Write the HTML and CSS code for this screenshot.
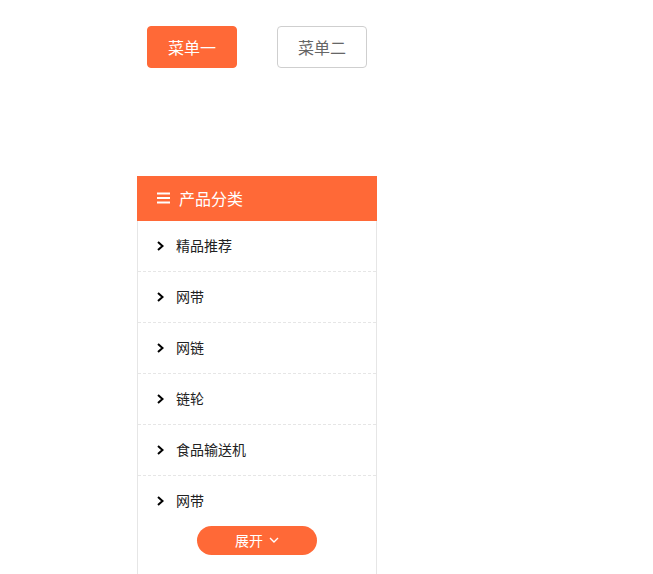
FILE: index.html
```html
<!DOCTYPE html>
<html lang="zh-CN">
<head>
<meta charset="utf-8">
<title>产品分类</title>
<link rel="stylesheet" href="styles.css">
</head>
<body>
<div class="menus">
  <button class="menu-btn active">菜单一</button>
  <button class="menu-btn">菜单二</button>
</div>
<div class="panel">
  <div class="panel-head">
    <svg class="bars" width="13" height="12" viewBox="0 0 13 12"><path d="M0 1.5h13M0 6h13M0 10.5h13" stroke="#fff" stroke-width="2"/></svg>
    <span>产品分类</span>
  </div>
  <ul class="list">
    <li class="item"><svg class="chev" width="7" height="10" viewBox="0 0 7 10"><path d="M1 1l4.5 4-4.5 4" fill="none" stroke="#000" stroke-width="2"/></svg><span>精品推荐</span></li>
    <li class="item"><svg class="chev" width="7" height="10" viewBox="0 0 7 10"><path d="M1 1l4.5 4-4.5 4" fill="none" stroke="#000" stroke-width="2"/></svg><span>网带</span></li>
    <li class="item"><svg class="chev" width="7" height="10" viewBox="0 0 7 10"><path d="M1 1l4.5 4-4.5 4" fill="none" stroke="#000" stroke-width="2"/></svg><span>网链</span></li>
    <li class="item"><svg class="chev" width="7" height="10" viewBox="0 0 7 10"><path d="M1 1l4.5 4-4.5 4" fill="none" stroke="#000" stroke-width="2"/></svg><span>链轮</span></li>
    <li class="item"><svg class="chev" width="7" height="10" viewBox="0 0 7 10"><path d="M1 1l4.5 4-4.5 4" fill="none" stroke="#000" stroke-width="2"/></svg><span>食品输送机</span></li>
    <li class="item last"><svg class="chev" width="7" height="10" viewBox="0 0 7 10"><path d="M1 1l4.5 4-4.5 4" fill="none" stroke="#000" stroke-width="2"/></svg><span>网带</span></li>
  </ul>
  <div class="more-wrap">
    <button class="more">展开 <svg class="down" width="10" height="6" viewBox="0 0 10 6"><path d="M1 1l4 4 4-4" fill="none" stroke="#fff" stroke-width="1.4"/></svg></button>
  </div>
</div>
</body>
</html>
```
FILE: styles.css
```css
* { box-sizing: border-box; }
html, body {
  margin: 0;
  padding: 0;
  background: #fff;
  font-family: "Noto Sans CJK SC", "Noto Sans", sans-serif;
  height: 574px;
  overflow: hidden;
}
.menus {
  display: flex;
  gap: 40px;
  padding: 26px 0 0 147px;
}
.menu-btn {
  width: 90px;
  height: 42px;
  border: 1px solid #cfcfcf;
  border-radius: 4px;
  background: #fff;
  color: #666;
  font-family: inherit;
  font-size: 16px;
  line-height: 20px;
  padding: 0 0 1px;
}
.menu-btn.active {
  background: #ff6937;
  border-color: #ff6937;
  color: #fff;
}
.panel {
  margin: 108px 0 0 137px;
  width: 240px;
  border: 1px solid #e6e6e6;
  border-top: none;
  min-height: 420px;
}
.panel-head {
  background: #ff6937;
  height: 45px;
  margin: 0 -1px;
  display: flex;
  align-items: center;
  padding: 0 0 1px 20px;
  color: #fff;
  font-size: 16px;
  gap: 9px;
}
.panel-head span { line-height: 20px; padding-bottom: 1px; }
.list {
  list-style: none;
  margin: 0;
  padding: 0;
}
.item {
  height: 51px;
  border-bottom: 1px dashed #e6e6e6;
  display: flex;
  align-items: center;
  padding: 0 0 2px 19px;
  font-size: 14px;
  color: #222;
  gap: 12px;
}
.chev { display: block; margin-top: 2px; }
.item span { line-height: 18px; }
.item.last {
  height: 50px;
  border-bottom: none;
}
.more-wrap {
  display: flex;
  justify-content: center;
}
.more {
  width: 120px;
  height: 29px;
  border: none;
  border-radius: 15px;
  background: #ff6937;
  color: #fff;
  font-family: inherit;
  font-size: 14px;
  line-height: 18px;
  display: flex;
  align-items: center;
  justify-content: center;
  gap: 6px;
  padding: 0 0 1px;
}
.down { display: block; }
```
